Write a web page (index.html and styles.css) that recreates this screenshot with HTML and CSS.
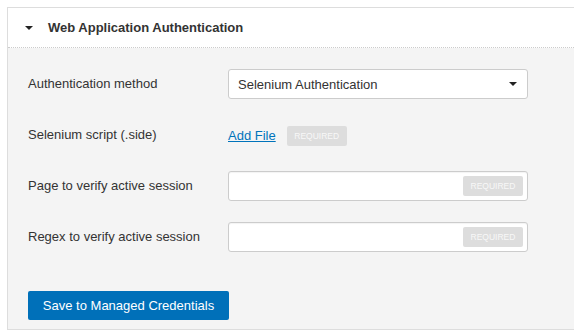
FILE: index.html
```html
<!DOCTYPE html>
<html lang="en">
<head>
    <meta charset="UTF-8">
    <title>Web Application Authentication</title>
    <link rel="stylesheet" href="styles.css">
</head>
<body>
    <div class="panel">
        <div class="panel-head">
            <span class="caret"></span>
            <span class="panel-title">Web Application Authentication</span>
        </div>
        <div class="panel-body">
            <div class="form">
                <label class="label">Authentication method</label>
                <div class="select">
                    <span>Selenium Authentication</span>
                    <span class="caret"></span>
                </div>

                <label class="label">Selenium script (.side)</label>
                <div class="file-row">
                    <a href="#" class="add-file">Add File</a>
                    <span class="badge">Required</span>
                </div>

                <label class="label">Page to verify active session</label>
                <div class="input">
                    <span class="badge">Required</span>
                </div>

                <label class="label">Regex to verify active session</label>
                <div class="input">
                    <span class="badge">Required</span>
                </div>
            </div>
            <button class="btn-save">Save to Managed Credentials</button>
        </div>
    </div>
</body>
</html>
```

FILE: styles.css
```css
:root {
    --border: #dddddd;
    --field-border: #cccccc;
    --text: #333333;
    --bg-body: #f4f4f4;
    --badge: #dddddd;
    --link: #0073bb;
    --btn: #0070b9;
}

body {
    margin: 0;
    overflow: hidden;
    font-family: "Liberation Sans", Arial, sans-serif;
    font-size: 13px;
    color: var(--text);
    background: #ffffff;
}

/* panel runs off the right edge, so no right border */
.panel {
    margin: 7px 0 0 7px;
    border: 1px solid var(--border);
    border-right: none;
}

.panel-head {
    display: flex;
    align-items: center;
    height: 39px;
    padding-left: 17px;
    background: #ffffff;
    border-bottom: 1px dotted var(--field-border);
}

.caret {
    width: 0;
    height: 0;
    border-left: 4px solid transparent;
    border-right: 4px solid transparent;
    border-top: 4px solid #222222;
}

.panel-title {
    margin-left: 15px;
    font-weight: bold;
}

.panel-body {
    background: var(--bg-body);
    padding: 21px 20px 9px 20px;
}

.form {
    display: grid;
    grid-template-columns: 200px 300px;
    grid-auto-rows: 30px;
    row-gap: 21px;
    align-items: center;
}

.label {
    line-height: 30px;
}

.select {
    box-sizing: border-box;
    height: 30px;
    display: flex;
    justify-content: space-between;
    align-items: center;
    padding: 0 10px 0 9px;
    background: #ffffff;
    border: 1px solid var(--field-border);
    border-radius: 3px;
}

.file-row {
    display: flex;
    align-items: center;
    gap: 11px;
    padding-top: 1px;
}

.add-file {
    color: var(--link);
    text-decoration: underline;
}

.badge {
    display: inline-block;
    width: 60px;
    height: 20px;
    line-height: 20px;
    text-align: center;
    background: var(--badge);
    color: #f8f8f8;
    border-radius: 2px;
    font-size: 8.5px;
    text-transform: uppercase;
}

.input {
    box-sizing: border-box;
    height: 30px;
    display: flex;
    justify-content: flex-end;
    align-items: center;
    padding-right: 4px;
    background: #ffffff;
    border: 1px solid var(--field-border);
    border-radius: 3px;
    box-shadow: inset 0 1px 1px rgba(0, 0, 0, 0.05);
}

.btn-save {
    margin-top: 39px;
    width: 201px;
    height: 29px;
    border: 0;
    border-radius: 2px;
    background: var(--btn);
    color: #ffffff;
    font-family: inherit;
    font-size: 13px;
    cursor: pointer;
}
```
